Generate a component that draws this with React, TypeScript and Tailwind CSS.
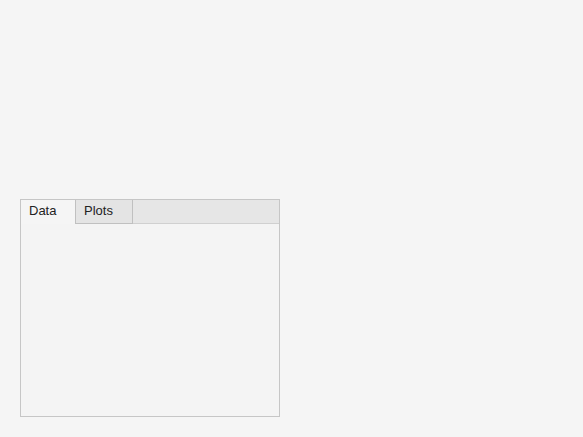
export default function App() {
  return (
    <div className="min-h-[437px] w-full bg-[#f5f5f5] pl-[20px] pt-[199px]" style={{ fontFamily: '"Liberation Sans", Arial, sans-serif' }}>
      <div className="flex h-[218px] w-[260px] flex-col border border-[#c6c6c6] bg-[#f4f4f4]">
        <div className="flex h-[24px] bg-[#e6e6e6]">
          <div className="flex h-[24px] w-[54px] items-center bg-[#f5f5f5] pb-[2px] pl-[8px] text-[13px] text-[#222]">Data</div>
          <div className="flex h-[24px] w-[58px] items-center border-b border-l border-r border-[#c0c0c0] bg-[#e4e4e4] pb-[1px] pl-[8px] text-[13px] text-[#222]">Plots</div>
          <div className="h-[24px] flex-1 border-b border-[#d0d0d0]"></div>
        </div>
        <div className="flex-1"></div>
      </div>
    </div>
  );
}
